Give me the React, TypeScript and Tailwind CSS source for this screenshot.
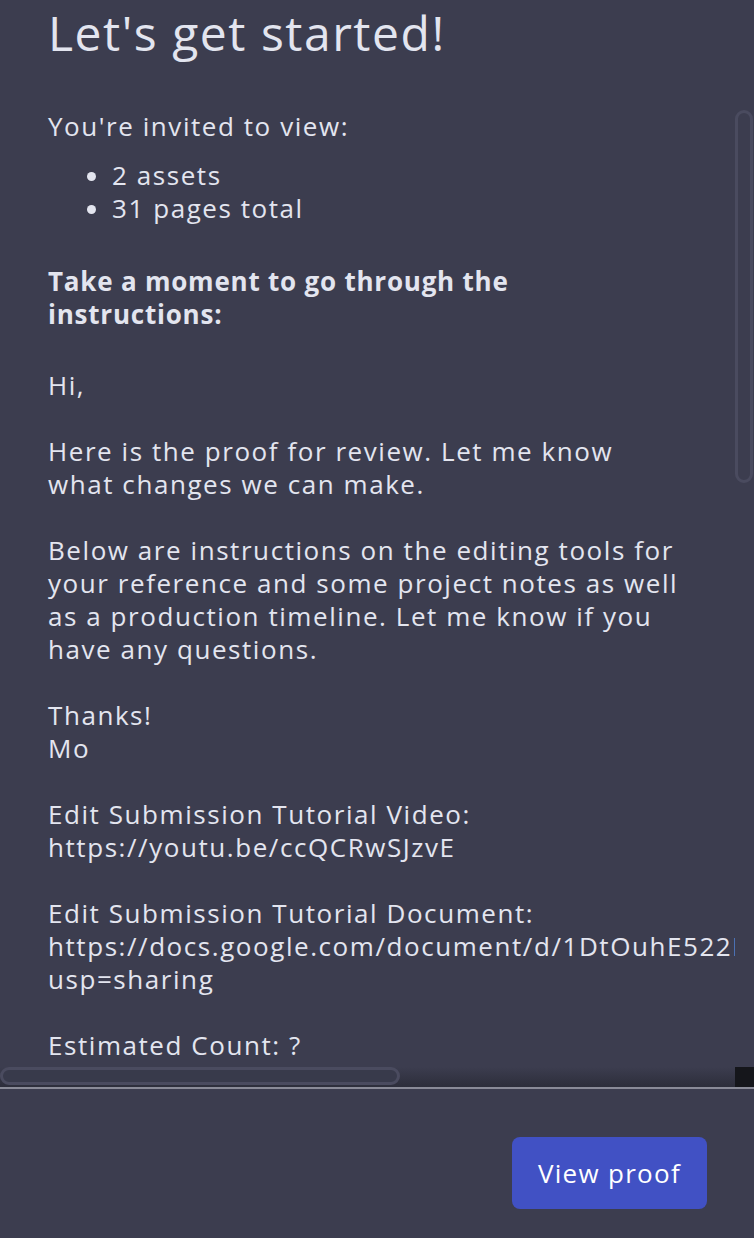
const font = "font-['Open_Sans',_'Liberation_Sans',_sans-serif]";

const message = `Hi,

Here is the proof for review. Let me know what changes we can make.

Below are instructions on the editing tools for your reference and some project notes as well as a production timeline. Let me know if you have any questions.

Thanks!
Mo

Edit Submission Tutorial Video:
https://youtu.be/ccQCRwSJzvE

Edit Submission Tutorial Document:
https://docs.google.com/document/d/1DtOuhE522NxQb7kLmV3pZr8sWfYcT2aHj9uE0gIoKdM/edit?usp=sharing

Estimated Count: ?

Production Timeline:
Round 1 edits due within 3 business days.`;

export default function App() {
  return (
    <div
      className={`${font} flex h-[1238px] w-[754px] flex-col overflow-hidden bg-[#3c3d4f] text-[#e3e5ef]`}
    >
      <header className="h-[108px] shrink-0 pl-12 pt-[4px]">
        <h1 className="text-[48px] leading-[58px] font-normal tracking-[0.032em]">
          Let's get started!
        </h1>
      </header>

      <section className="flex min-h-0 flex-1 flex-col">
        <div className="flex min-h-0 flex-1">
          <div className="min-w-0 flex-1 overflow-hidden px-12 pt-[2px] text-[26px] leading-[33px] tracking-[0.06em]">
            <p>You're invited to view:</p>
            <ul className="mt-4 list-disc pl-16">
              <li>2 assets</li>
              <li>31 pages total</li>
            </ul>
            <h2 className="mt-10 w-[520px] font-bold tracking-[0.03em]">
              Take a moment to go through the instructions:
            </h2>
            <p className="mt-[38px] whitespace-pre-wrap">{message}</p>
          </div>
          <div className="w-[19px] shrink-0 pt-[2px]">
            <div className="h-[373px] w-[18px] rounded-full border-[3px] border-[#4a4b5f]" />
          </div>
        </div>
        <div className="flex h-[20px] shrink-0">
          <div className="flex-1 bg-gradient-to-b from-[#3c3d4f] to-[#2d2e3b]">
            <div className="h-[18px] w-[400px] rounded-full border-[3px] border-[#4a4b5f] bg-[#383a4b]" />
          </div>
          <div className="w-[19px] shrink-0 bg-[#15161b]" />
        </div>
      </section>

      <footer className="flex h-[151px] shrink-0 items-start justify-end border-t-2 border-[#8a8b98] pr-[47px] pt-[48px]">
        <button
          type="button"
          className="h-[72px] w-[195px] rounded-[8px] bg-[#4151c4] text-[26px] font-medium tracking-[0.05em] text-white"
        >
          View proof
        </button>
      </footer>
    </div>
  );
}
